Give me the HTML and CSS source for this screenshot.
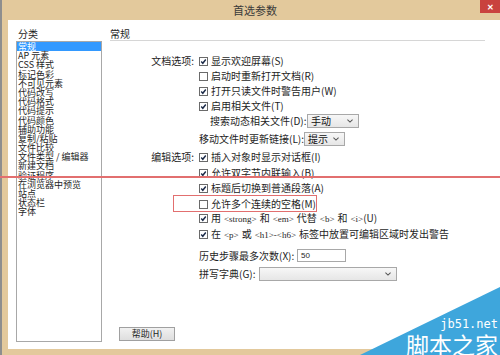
FILE: index.html
```html
<!DOCTYPE html>
<html lang="zh-CN">
<head>
    <meta charset="UTF-8">
    <meta name="viewport" content="width=device-width, initial-scale=1.0">
    <title>首选参数</title>
    <link rel="stylesheet" href="styles.css">
</head>
<body>
    <div class="window">
        <header class="titlebar">
            <span class="title">首选参数</span>
            <span class="close">✕</span>
        </header>

        <div class="dialog">
            <aside class="categories">
                <div class="heading">分类</div>
                <ul class="list">
                    <li class="selected">常规</li>
                    <li>AP 元素</li>
                    <li>CSS 样式</li>
                    <li>标记色彩</li>
                    <li>不可见元素</li>
                    <li>代码改写</li>
                    <li>代码格式</li>
                    <li>代码提示</li>
                    <li>代码颜色</li>
                    <li>辅助功能</li>
                    <li>复制/粘贴</li>
                    <li>文件比较</li>
                    <li>文件类型 / 编辑器</li>
                    <li>新建文档</li>
                    <li>验证程序</li>
                    <li>在浏览器中预览</li>
                    <li>站点</li>
                    <li>状态栏</li>
                    <li>字体</li>
                </ul>
            </aside>

            <section class="panel">
                <div class="heading panel-heading">常规</div>
                <div class="form">
                    <div class="row">
                        <span class="label">文档选项:</span>
                        <span class="check"><span class="box"><svg viewBox="0 0 9 9"><path d="M1.6 4.6 L3.6 6.8 L7.4 1.9"/></svg></span>显示欢迎屏幕(S)</span>
                    </div>
                    <div class="row">
                        <span class="label"></span>
                        <span class="check"><span class="box"></span>启动时重新打开文档(R)</span>
                    </div>
                    <div class="row">
                        <span class="label"></span>
                        <span class="check"><span class="box"><svg viewBox="0 0 9 9"><path d="M1.6 4.6 L3.6 6.8 L7.4 1.9"/></svg></span>打开只读文件时警告用户(W)</span>
                    </div>
                    <div class="row">
                        <span class="label"></span>
                        <span class="check"><span class="box"><svg viewBox="0 0 9 9"><path d="M1.6 4.6 L3.6 6.8 L7.4 1.9"/></svg></span>启用相关文件(T)</span>
                    </div>
                    <div class="row">
                        <span class="label"></span>
                        <span class="field-label search-label">搜索动态相关文件(D):</span>
                        <span class="select select-manual">手动<svg class="chevron" viewBox="0 0 7 4"><path d="M0.5 0.5 L3.5 3.2 L6.5 0.5"/></svg></span>
                    </div>
                    <div class="row row-gap">
                        <span class="label"></span>
                        <span class="field-label move-label">移动文件时更新链接(L):</span>
                        <span class="select select-hint">提示<svg class="chevron" viewBox="0 0 7 4"><path d="M0.5 0.5 L3.5 3.2 L6.5 0.5"/></svg></span>
                    </div>

                    <div class="group">
                        <div class="row tall">
                            <span class="label">编辑选项:</span>
                            <span class="check"><span class="box"><svg viewBox="0 0 9 9"><path d="M1.6 4.6 L3.6 6.8 L7.4 1.9"/></svg></span>插入对象时显示对话框(I)</span>
                        </div>
                        <div class="row tall">
                            <span class="label"></span>
                            <span class="check"><span class="box"><svg viewBox="0 0 9 9"><path d="M1.6 4.6 L3.6 6.8 L7.4 1.9"/></svg></span>允许双字节内联输入(B)</span>
                        </div>
                        <div class="row tall">
                            <span class="label"></span>
                            <span class="check"><span class="box"><svg viewBox="0 0 9 9"><path d="M1.6 4.6 L3.6 6.8 L7.4 1.9"/></svg></span>标题后切换到普通段落(A)</span>
                        </div>
                        <div class="row tall">
                            <span class="label"></span>
                            <span class="check"><span class="box"></span>允许多个连续的空格(M)</span>
                        </div>
                        <div class="row tall">
                            <span class="label"></span>
                            <span class="check"><span class="box"><svg viewBox="0 0 9 9"><path d="M1.6 4.6 L3.6 6.8 L7.4 1.9"/></svg></span>用<span class="tag">&lt;strong&gt;</span>和<span class="tag">&lt;em&gt;</span>代替<span class="tag">&lt;b&gt;</span>和<span class="tag last">&lt;i&gt;</span>(U)</span>
                        </div>
                        <div class="row tall">
                            <span class="label"></span>
                            <span class="check"><span class="box"><svg viewBox="0 0 9 9"><path d="M1.6 4.6 L3.6 6.8 L7.4 1.9"/></svg></span>在<span class="tag">&lt;p&gt;</span>或<span class="tag">&lt;h1&gt;-&lt;h6&gt;</span>标签中放置可编辑区域时发出警告</span>
                        </div>
                    </div>

                    <div class="row history-row">
                        <span class="label"></span>
                        <span class="field-label history-label">历史步骤最多次数(X):</span>
                        <span class="input">50</span>
                    </div>
                    <div class="row spell-row">
                        <span class="label"></span>
                        <span class="field-label spell-label">拼写字典(G):</span>
                        <span class="select select-spell"><svg class="chevron" viewBox="0 0 7 4"><path d="M0.5 0.5 L3.5 3.2 L6.5 0.5"/></svg></span>
                    </div>
                </div>
                <button class="help">帮助(H)</button>
            </section>
        </div>
    </div>

    <!-- annotations drawn over the screenshot -->
    <div class="mark-line"></div>
    <div class="mark-box"></div>
    <div class="watermark">
        <svg class="watermark-bg" viewBox="0 0 140 68"><polygon points="0,68 140,0 140,68"/></svg>
        <div class="watermark-site">jb51.net</div>
        <div class="watermark-name">脚本之家</div>
    </div>
</body>
</html>
```

FILE: styles.css
```css
* {
    box-sizing: border-box;
}
:root {
    --frame-color: #e3c99c;
    --text-color: #1e1e1e;
    --border-color: #a8a8a8;
    --mark-color: #e26f6f;
    --brand-blue: #3ea6dc;
}
body {
    margin: 0;
    width: 500px;
    height: 355px;
    overflow: hidden;
    position: relative;
    background-color: #8e8e8e;
    font-family: "Noto Sans CJK SC", "Liberation Sans", sans-serif;
    font-size: 10px;
    color: var(--text-color);
}
.window {
    margin-left: 2px;
    width: 498px;
    height: 355px;
    background-color: var(--frame-color);
    display: flex;
    flex-direction: column;
    padding: 0 0 6px 6px;
}
.titlebar {
    height: 20px;
    flex: none;
    display: flex;
    align-items: center;
    justify-content: center;
    position: relative;
}
.title {
    font-size: 11px;
    color: #3a3a3a;
    margin-left: 2px;
}
.close {
    position: absolute;
    top: 0;
    right: 0;
    width: 20px;
    height: 13px;
    background-color: #c9423e;
    color: #fff;
    font-size: 8px;
    font-weight: 700;
    line-height: 13px;
    text-align: center;
}
.dialog {
    flex: 1;
    background-color: #fff;
    display: flex;
    padding: 8px 0 7px 8px;
}
.heading {
    height: 12px;
    line-height: 12px;
    font-size: 10px;
    padding-left: 2px;
}
.categories {
    width: 86px;
    flex: none;
    display: flex;
    flex-direction: column;
}
.list {
    flex: 1;
    margin: 1px 0 0;
    padding: 0;
    list-style: none;
    border: 1px solid var(--border-color);
    font-size: 9px;
    line-height: 9.2px;
}
.list li {
    height: 9.2px;
    padding-left: 1px;
    white-space: nowrap;
}
.list .selected {
    background-color: #3399ff;
    color: #fff;
}
.panel {
    flex: 1;
    margin-left: 8px;
    display: flex;
    flex-direction: column;
}
.panel-heading {
    height: 13px;
    padding: 0 0 1px 0;
    margin-right: 15px;
    border-bottom: 1px solid #d6d6d6;
}
.form {
    margin-top: 12px;
    display: flex;
    flex-direction: column;
}
.row {
    height: 15px;
    display: flex;
    align-items: center;
    white-space: nowrap;
}
.row.tall {
    height: 15.5px;
}
.row-gap {
    margin-top: 3px;
}
.group {
    margin-top: 3px;
}
.label {
    width: 89px;
    flex: none;
    text-align: right;
    padding-right: 5px;
}
.check {
    display: block;
    line-height: 15px;
}
.box {
    display: inline-block;
    vertical-align: -1px;
    width: 9px;
    height: 9px;
    margin-right: 3px;
    border: 1px solid #6a6a6a;
    background-color: #fff;
}
.box svg {
    display: block;
    width: 7px;
    height: 7px;
    fill: none;
    stroke: #1b2a48;
    stroke-width: 1.8;
}
.tag {
    font-family: "Liberation Serif", serif;
    font-size: 9px;
    margin: 0 3px;
}
.tag.last {
    margin-right: 0;
}
.field-label {
    flex: none;
}
.search-label {
    margin-left: 11px;
    width: 97px;
}
.move-label {
    width: 105px;
}
.history-label {
    width: 98px;
}
.spell-label {
    width: 60px;
}
.select {
    height: 14px;
    border: 1px solid var(--border-color);
    background: linear-gradient(#f7f7f7, #e6e6e6);
    display: flex;
    align-items: center;
    padding-left: 3px;
    font-size: 10px;
    color: #111;
}
.select-manual {
    width: 52px;
}
.select-hint {
    width: 41px;
}
.select-spell {
    width: 138px;
}
.chevron {
    width: 6px;
    height: 4px;
    margin-left: auto;
    margin-right: 5px;
    fill: none;
    stroke: #555;
    stroke-width: 1.2;
}
.history-row {
    height: 14px;
    margin-top: 6px;
}
.spell-row {
    margin-top: 4px;
}
.input {
    width: 49px;
    height: 13px;
    border: 1px solid var(--border-color);
    background-color: #fff;
    font-family: "Liberation Sans", sans-serif;
    font-size: 8px;
    line-height: 11px;
    padding-left: 3px;
}
.help {
    margin-top: auto;
    margin-left: 9px;
    margin-bottom: 1px;
    width: 56px;
    height: 14px;
    padding: 0;
    border: 1px solid #a0a0a0;
    background: linear-gradient(#f1f1f1, #dedede);
    font-family: inherit;
    font-size: 9px;
    line-height: 12px;
    color: var(--text-color);
}
.mark-line {
    position: absolute;
    left: 0;
    top: 176px;
    width: 500px;
    height: 2px;
    background-color: var(--mark-color);
}
.mark-box {
    position: absolute;
    left: 173px;
    top: 195px;
    width: 144px;
    height: 17px;
    border: 1px solid var(--mark-color);
}
.watermark {
    position: absolute;
    right: 0;
    bottom: 0;
    width: 140px;
    height: 68px;
}
.watermark-bg {
    position: absolute;
    left: 0;
    top: 0;
    width: 140px;
    height: 68px;
    fill: var(--brand-blue);
}
.watermark-site {
    position: absolute;
    right: 2px;
    top: 30px;
    font-family: "DejaVu Sans Mono", monospace;
    font-size: 12px;
    line-height: 14px;
    color: #fff;
}
.watermark-name {
    position: absolute;
    right: 2px;
    top: 44px;
    font-family: "Noto Sans CJK SC", sans-serif;
    font-size: 23px;
    line-height: 26px;
    color: #fff;
}
```
